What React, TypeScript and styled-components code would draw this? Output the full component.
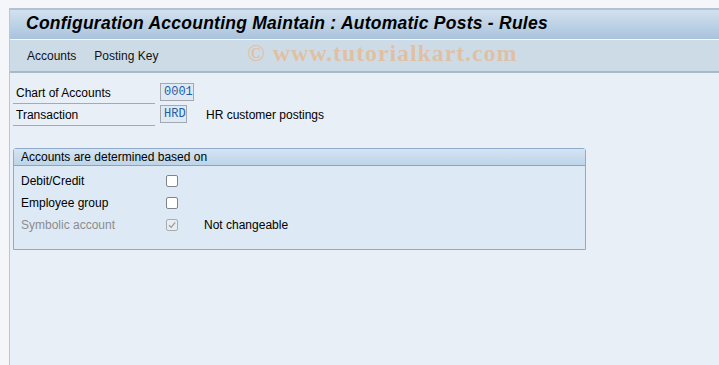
import React from 'react'
import styled, { createGlobalStyle } from 'styled-components'

const GlobalStyle = createGlobalStyle`
  html, body {
    margin: 0;
    padding: 0;
    background: #f4f6fa;
    font-family: "Liberation Sans", Arial, sans-serif;
    font-size: 12px;
    color: #000;
  }
  #root {
    height: 365px;
    overflow: hidden;
  }
`

const Frame = styled.div`
  margin: 8px 0 0 9px;
  height: 357px;
  border-top: 2px solid #b4c1ce;
  border-left: 1px solid #b9c8d8;
  display: flex;
  flex-direction: column;
  background: #e8eff7;
  position: relative;
`

const TitleBar = styled.div`
  height: 30px;
  display: flex;
  align-items: center;
  padding: 0 0 3px 16px;
  box-sizing: border-box;
  background: linear-gradient(#d2e1ef, #a9c3dc);
  border-bottom: 1px solid #f4f8fc;
`

const Title = styled.h1`
  margin: 0;
  font-size: 17.5px;
  font-weight: bold;
  font-style: italic;
  letter-spacing: 0.25px;
  color: #000;
`

const Toolbar = styled.div`
  height: 31px;
  display: flex;
  align-items: center;
  gap: 18px;
  padding-left: 17px;
  background: #cddbe7;
  border-bottom: 2px solid #a9b9c8;
  position: relative;
`

const MenuItem = styled.span`
  font-size: 12px;
  color: #111;
`

const Watermark = styled.span`
  position: absolute;
  left: 237px;
  top: 0px;
  font-family: "Liberation Serif", "Times New Roman", serif;
  font-size: 24px;
  font-weight: bold;
  color: rgba(244, 166, 96, 0.5);
  letter-spacing: 0.9px;
`

const Content = styled.div`
  padding: 9px 0 0 3px;
  display: flex;
  flex-direction: column;
`

const FieldRow = styled.div`
  display: flex;
  align-items: flex-start;
  height: 22px;
`

const Label = styled.div`
  width: 139px;
  height: 21px;
  padding-left: 3px;
  display: flex;
  align-items: center;
  border-bottom: 1px solid #9eabb8;
`

const Input = styled.div<{ w: number }>`
  margin-left: 5px;
  margin-top: 1px;
  width: ${p => p.w}px;
  height: 18px;
  box-sizing: border-box;
  border: 1px solid #a2a9b1;
  background: #dfe9f4;
  font-family: "Liberation Mono", "Courier New", monospace;
  font-size: 12px;
  color: #1d5ea6;
  display: flex;
  align-items: center;
  padding-left: 3px;
`

const Desc = styled.span`
  margin-left: 19px;
  line-height: 22px;
`

const Group = styled.div`
  margin-top: 22px;
  width: 573px;
  height: 102px;
  box-sizing: border-box;
  border: 1px solid #8faacb;
  border-radius: 3px 3px 0 0;
  background: #dde9f4;
  display: flex;
  flex-direction: column;
`

const GroupHead = styled.div`
  height: 16px;
  padding-left: 7px;
  display: flex;
  align-items: center;
  background: linear-gradient(#d4e4f2, #bdd4e9);
  border-bottom: 1px solid #8aa4c4;
`

const GroupBody = styled.div`
  padding-top: 4px;
  display: flex;
  flex-direction: column;
`

const CheckRow = styled.div<{ disabled?: boolean }>`
  height: 22px;
  display: flex;
  align-items: center;
  padding-left: 7px;
  color: ${p => (p.disabled ? '#8d8d8d' : '#000')};
`

const CheckLabel = styled.span`
  width: 145px;
`

const Box = styled.span<{ disabled?: boolean }>`
  width: 12px;
  height: 12px;
  box-sizing: border-box;
  border: 1px solid ${p => (p.disabled ? '#a8adb3' : '#7f858c')};
  border-radius: 2px;
  background: ${p => (p.disabled ? '#e8edf2' : '#fff')};
  display: flex;
  align-items: center;
  justify-content: center;
`

const CheckNote = styled.span`
  margin-left: 26px;
  color: #000;
`

function Check({ checked, disabled }: { checked?: boolean; disabled?: boolean }) {
  return (
    <Box disabled={disabled}>
      {checked && (
        <svg width="10" height="10" viewBox="0 0 10 10">
          <path d="M2 5.2 L4.2 7.4 L8.2 2.4" fill="none" stroke="#9a9a9a" strokeWidth="1.3" />
        </svg>
      )}
    </Box>
  )
}

export default function App() {
  return (
    <>
      <GlobalStyle />
      <Frame>
        <TitleBar>
          <Title>Configuration Accounting Maintain : Automatic Posts - Rules</Title>
        </TitleBar>
        <Toolbar>
          <MenuItem>Accounts</MenuItem>
          <MenuItem>Posting Key</MenuItem>
          <Watermark>© www.tutorialkart.com</Watermark>
        </Toolbar>
        <Content>
          <FieldRow>
            <Label>Chart of Accounts</Label>
            <Input w={34}>0001</Input>
          </FieldRow>
          <FieldRow>
            <Label>Transaction</Label>
            <Input w={27}>HRD</Input>
            <Desc>HR customer postings</Desc>
          </FieldRow>
          <Group>
            <GroupHead>Accounts are determined based on</GroupHead>
            <GroupBody>
              <CheckRow>
                <CheckLabel>Debit/Credit</CheckLabel>
                <Check />
              </CheckRow>
              <CheckRow>
                <CheckLabel>Employee group</CheckLabel>
                <Check />
              </CheckRow>
              <CheckRow disabled>
                <CheckLabel>Symbolic account</CheckLabel>
                <Check checked disabled />
                <CheckNote>Not changeable</CheckNote>
              </CheckRow>
            </GroupBody>
          </Group>
        </Content>
      </Frame>
    </>
  )
}
